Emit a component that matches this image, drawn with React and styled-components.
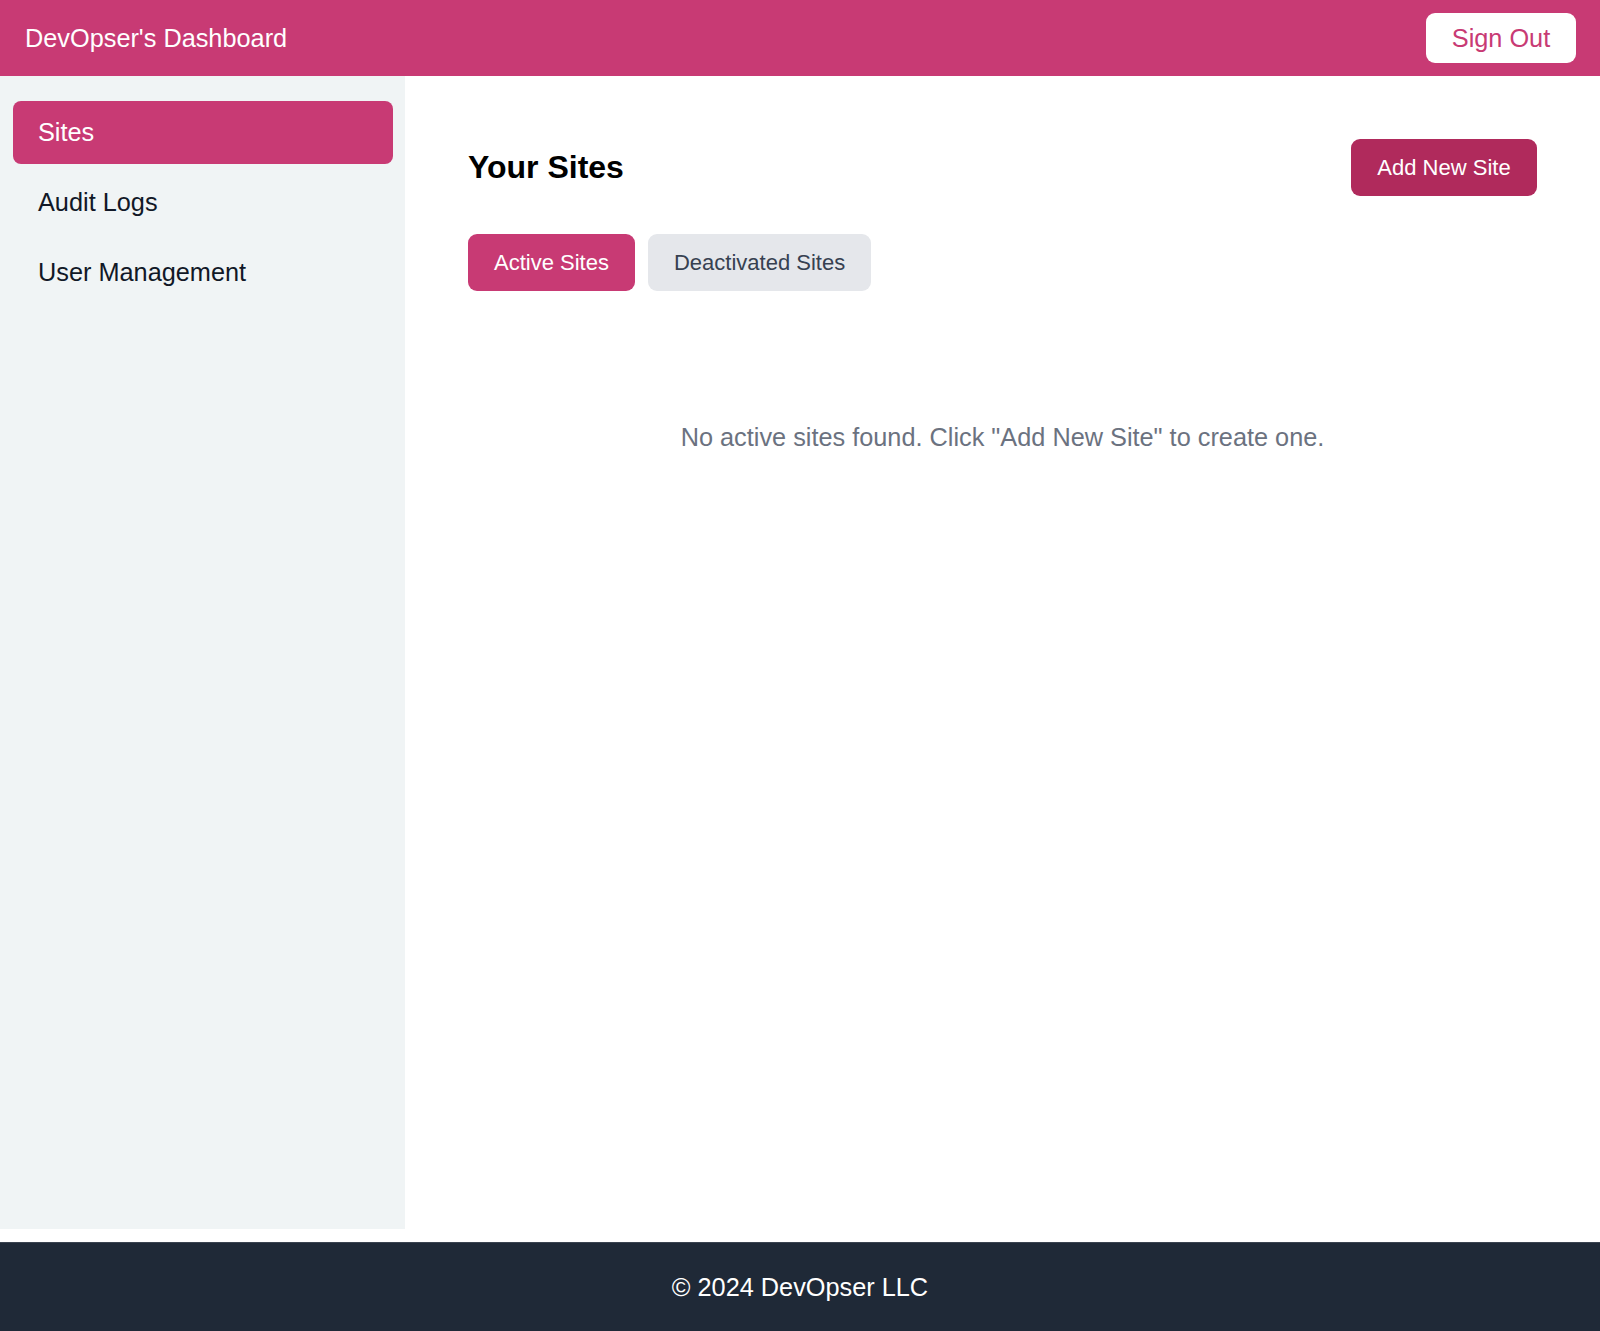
import React from "react";
import styled, { createGlobalStyle } from "styled-components";

const GlobalStyle = createGlobalStyle`
  html, body {
    margin: 0;
    padding: 0;
    background: #ffffff;
    font-family: "Liberation Sans", Arial, sans-serif;
  }
  * {
    box-sizing: border-box;
  }
`;

function App() {
  return (
    <Page>
      <GlobalStyle />
      <Header>
        <Title>DevOpser's Dashboard</Title>
        <SignOut>Sign Out</SignOut>
      </Header>
      <Body>
        <Sidebar>
          <NavItem active>Sites</NavItem>
          <NavItem>Audit Logs</NavItem>
          <NavItem>User Management</NavItem>
        </Sidebar>
        <Main>
          <Toprow>
            <Heading>Your Sites</Heading>
            <AddButton>Add New Site</AddButton>
          </Toprow>
          <Tabs>
            <Tab active>Active Sites</Tab>
            <Tab>Deactivated Sites</Tab>
          </Tabs>
          <Empty>No active sites found. Click "Add New Site" to create one.</Empty>
        </Main>
      </Body>
      <Footer>© 2024 DevOpser LLC</Footer>
    </Page>
  );
}

export default App;

const Page = styled.div`
  display: flex;
  flex-direction: column;
  min-height: 1331px;
`;
const Header = styled.header`
  height: 76px;
  background-color: #c83a74;
  display: flex;
  align-items: center;
  justify-content: space-between;
  padding: 0 25px;
`;
const Title = styled.h1`
  margin: 0;
  color: #ffffff;
  font-size: 25.3px;
  font-weight: normal;
`;
const SignOut = styled.button`
  width: 150px;
  height: 50px;
  background: #ffffff;
  color: #c83a74;
  border: none;
  border-radius: 9px;
  font-family: inherit;
  font-size: 25.3px;
  margin-right: -1px;
`;
const Body = styled.div`
  display: flex;
  height: 1153px;
`;
const Sidebar = styled.nav`
  width: 405px;
  background-color: #f0f4f5;
  padding: 25px 12px;
  display: flex;
  flex-direction: column;
  gap: 7px;
`;
const NavItem = styled.div`
  height: 63px;
  display: flex;
  align-items: center;
  padding: 0 25px;
  margin-left: 1px;
  border-radius: 8px;
  font-size: 25.3px;
  color: ${(p) => (p.active ? "#ffffff" : "#111827")};
  background-color: ${(p) => (p.active ? "#c83a74" : "transparent")};
`;
const Main = styled.main`
  flex: 1;
  padding: 63px 63px;
`;
const Toprow = styled.div`
  display: flex;
  justify-content: space-between;
  align-items: center;
`;
const Heading = styled.h2`
  margin: 0;
  font-size: 32px;
  font-weight: bold;
  color: #000000;
`;
const AddButton = styled.button`
  width: 186px;
  height: 57px;
  background-color: #b02a5c;
  color: #ffffff;
  border: none;
  border-radius: 9px;
  font-family: inherit;
  font-size: 22px;
`;
const Tabs = styled.div`
  display: flex;
  gap: 13px;
  margin-top: 38px;
`;
const Tab = styled.button`
  height: 57px;
  padding: 0 26px;
  border: none;
  border-radius: 9px;
  font-family: inherit;
  font-size: 22px;
  color: ${(p) => (p.active ? "#ffffff" : "#374151")};
  background-color: ${(p) => (p.active ? "#c83a74" : "#e5e7eb")};
`;
const Empty = styled.p`
  margin: 132px 0 0;
  text-align: center;
  font-size: 25.3px;
  color: #6b7280;
`;
const Footer = styled.footer`
  margin-top: 13px;
  height: 89px;
  background-color: #1f2937;
  border-top: 1px solid #3a4350;
  color: #ffffff;
  font-size: 25.3px;
  display: flex;
  align-items: center;
  justify-content: center;
`;
